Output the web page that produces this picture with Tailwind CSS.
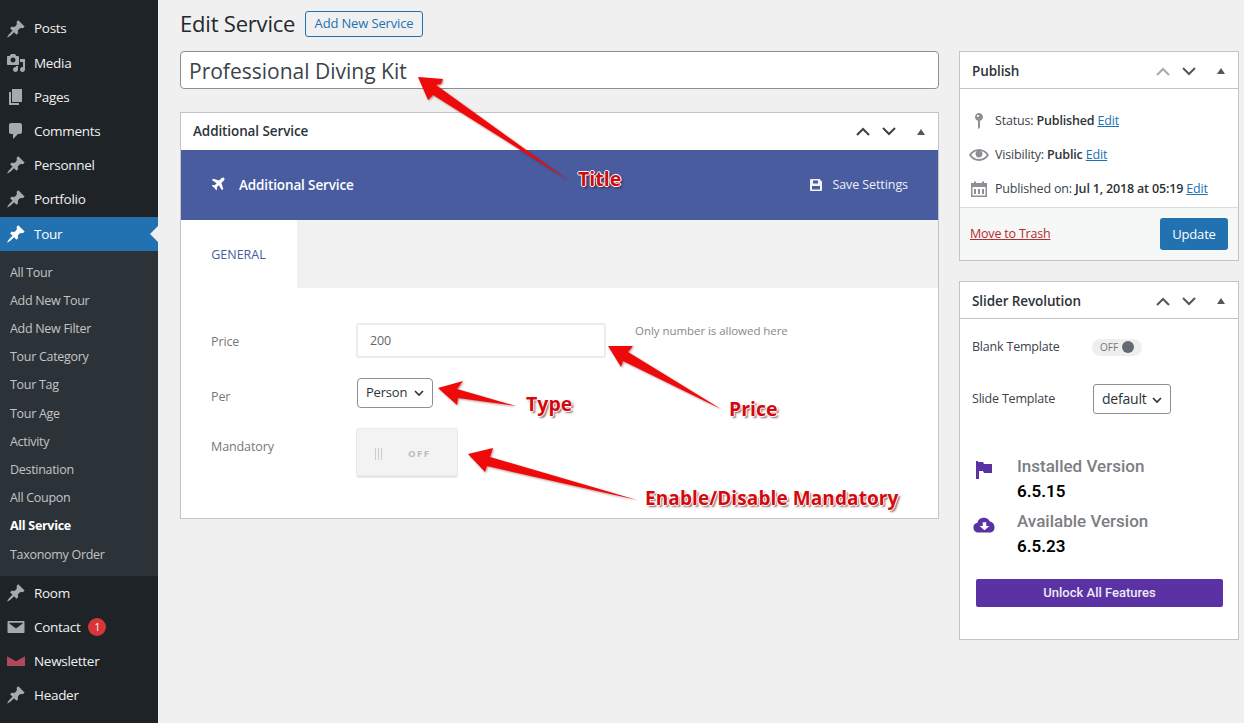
<!DOCTYPE html>
<html lang="en">
<head>
    <meta charset="UTF-8">
    <meta name="viewport" content="width=device-width, initial-scale=1.0">
    <title>Edit Service</title>
    <script src="https://cdn.jsdelivr.net/npm/@tailwindcss/browser@4"></script>
</head>
<body class="h-[723px] overflow-hidden bg-[#f0f0f1] font-['Open_Sans',sans-serif] text-[13px] text-[#3c434a]">
    <div class="relative flex h-[723px]">
        <!-- admin menu -->
        <aside class="w-[158px] shrink-0 bg-[#1d2327] pt-[12px] text-[13.5px] tracking-[-0.3px] text-[#f0f0f1]">
            <a class="-mt-[1px] flex h-[35px] items-center"><svg class="ml-[6px] mr-[8px] h-[20px] w-[20px] fill-[#a7aaad]" viewBox="0 0 20 20"><path d="M10.44 3.02l1.82-1.82 6.36 6.35-1.83 1.82c-1.05-.68-2.48-.57-3.41.36l-.75.75c-.92.93-1.04 2.35-.35 3.41l-1.83 1.82-2.41-2.41-2.8 2.79c-.42.42-3.38 2.71-3.8 2.29s1.86-3.39 2.28-3.81l2.79-2.79L4.1 9.36l1.83-1.82c1.05.69 2.48.57 3.4-.36l.75-.75c.93-.92 1.05-2.35.36-3.41z"/></svg>Posts</a>
            <a class="flex h-[34px] items-center"><svg class="ml-[6px] mr-[8px] h-[20px] w-[20px] fill-[#a7aaad]" viewBox="0 0 20 20"><path d="M13 11V4c0-.55-.45-1-1-1h-1.67L9 1H5L3.67 3H2c-.55 0-1 .45-1 1v7c0 .55.45 1 1 1h10c.55 0 1-.45 1-1zM7 4.5c1.38 0 2.5 1.12 2.5 2.5S8.38 9.5 7 9.5 4.5 8.38 4.5 7 5.62 4.5 7 4.5zM14 6h5v10.5c0 1.38-1.12 2.5-2.5 2.5S14 17.88 14 16.5s1.12-2.5 2.5-2.5c.17 0 .34.02.5.05V9h-3V6zm-4 8.05V13h2v3.5c0 1.38-1.12 2.5-2.5 2.5S7 17.88 7 16.5 8.12 14 9.5 14c.17 0 .34.02.5.05z"/></svg>Media</a>
            <a class="flex h-[34px] items-center"><svg class="ml-[6px] mr-[8px] h-[20px] w-[20px] fill-[#a7aaad]" viewBox="0 0 20 20"><path d="M6 15V2h10v13H6zm-1 1h8v2H3V5h2v11z"/></svg>Pages</a>
            <a class="flex h-[34px] items-center"><svg class="ml-[6px] mr-[8px] h-[20px] w-[20px] fill-[#a7aaad]" viewBox="0 0 20 20"><path d="M5 2h9c1.1 0 2 .9 2 2v7c0 1.1-.9 2-2 2h-2l-5 5v-5H5c-1.1 0-2-.9-2-2V4c0-1.1.9-2 2-2z"/></svg>Comments</a>
            <a class="flex h-[34px] items-center"><svg class="ml-[6px] mr-[8px] h-[20px] w-[20px] fill-[#a7aaad]" viewBox="0 0 20 20"><path d="M10.44 3.02l1.82-1.82 6.36 6.35-1.83 1.82c-1.05-.68-2.48-.57-3.41.36l-.75.75c-.92.93-1.04 2.35-.35 3.41l-1.83 1.82-2.41-2.41-2.8 2.79c-.42.42-3.38 2.71-3.8 2.29s1.86-3.39 2.28-3.81l2.79-2.79L4.1 9.36l1.83-1.82c1.05.69 2.48.57 3.4-.36l.75-.75c.93-.92 1.05-2.35.36-3.41z"/></svg>Personnel</a>
            <a class="flex h-[34px] items-center"><svg class="ml-[6px] mr-[8px] h-[20px] w-[20px] fill-[#a7aaad]" viewBox="0 0 20 20"><path d="M10.44 3.02l1.82-1.82 6.36 6.35-1.83 1.82c-1.05-.68-2.48-.57-3.41.36l-.75.75c-.92.93-1.04 2.35-.35 3.41l-1.83 1.82-2.41-2.41-2.8 2.79c-.42.42-3.38 2.71-3.8 2.29s1.86-3.39 2.28-3.81l2.79-2.79L4.1 9.36l1.83-1.82c1.05.69 2.48.57 3.4-.36l.75-.75c.93-.92 1.05-2.35.36-3.41z"/></svg>Portfolio</a>
            <a class="relative mt-[1px] flex h-[34px] items-center bg-[#2271b1] text-white"><svg class="ml-[6px] mr-[8px] h-[20px] w-[20px] fill-white" viewBox="0 0 20 20"><path d="M10.44 3.02l1.82-1.82 6.36 6.35-1.83 1.82c-1.05-.68-2.48-.57-3.41.36l-.75.75c-.92.93-1.04 2.35-.35 3.41l-1.83 1.82-2.41-2.41-2.8 2.79c-.42.42-3.38 2.71-3.8 2.29s1.86-3.39 2.28-3.81l2.79-2.79L4.1 9.36l1.83-1.82c1.05.69 2.48.57 3.4-.36l.75-.75c.93-.92 1.05-2.35.36-3.41z"/></svg>Tour<span class="absolute right-0 top-[9px] h-0 w-0 border-y-[8px] border-r-[8px] border-y-transparent border-r-[#f0f0f1]"></span></a>
            <div class="flex h-[325px] flex-col bg-[#2c3338] pl-[10px] pt-[8px] text-[12.5px] text-[#c3c4c7]">
                <a class="flex h-[28.2px] items-center">All Tour</a>
                <a class="flex h-[28.2px] items-center">Add New Tour</a>
                <a class="flex h-[28.2px] items-center">Add New Filter</a>
                <a class="flex h-[28.2px] items-center">Tour Category</a>
                <a class="flex h-[28.2px] items-center">Tour Tag</a>
                <a class="flex h-[28.2px] items-center">Tour Age</a>
                <a class="flex h-[28.2px] items-center">Activity</a>
                <a class="flex h-[28.2px] items-center">Destination</a>
                <a class="flex h-[28.2px] items-center">All Coupon</a>
                <a class="flex h-[28.2px] items-center font-bold text-white">All Service</a>
                <a class="flex h-[28.2px] items-center">Taxonomy Order</a>
            </div>
            <a class="flex h-[34px] items-center"><svg class="ml-[6px] mr-[8px] h-[20px] w-[20px] fill-[#a7aaad]" viewBox="0 0 20 20"><path d="M10.44 3.02l1.82-1.82 6.36 6.35-1.83 1.82c-1.05-.68-2.48-.57-3.41.36l-.75.75c-.92.93-1.04 2.35-.35 3.41l-1.83 1.82-2.41-2.41-2.8 2.79c-.42.42-3.38 2.71-3.8 2.29s1.86-3.39 2.28-3.81l2.79-2.79L4.1 9.36l1.83-1.82c1.05.69 2.48.57 3.4-.36l.75-.75c.93-.92 1.05-2.35.36-3.41z"/></svg>Room</a>
            <a class="flex h-[34px] items-center"><svg class="ml-[6px] mr-[8px] h-[20px] w-[20px] fill-[#a7aaad]" viewBox="0 0 20 20"><path d="M2.5 4h15c.6 0 1 .4 1 1v10c0 .6-.4 1-1 1h-15c-.6 0-1-.4-1-1V5c0-.6.4-1 1-1zm7.5 7.6l6.6-5c.3-.2.2-.8-.3-.8H3.7c-.5 0-.6.6-.3.8z"/></svg>Contact<span class="ml-[8px] flex h-[18px] w-[18px] items-center justify-center rounded-full bg-[#d63638] text-[10px] tracking-normal text-white">1</span></a>
            <a class="flex h-[34px] items-center"><svg class="ml-[6px] mr-[8px] h-[20px] w-[20px] fill-[#b0475a]" viewBox="0 0 20 20"><path d="M1 5.2l9 5 9-5V15H1z"/></svg>Newsletter</a>
            <a class="flex h-[34px] items-center"><svg class="ml-[6px] mr-[8px] h-[20px] w-[20px] fill-[#a7aaad]" viewBox="0 0 20 20"><path d="M10.44 3.02l1.82-1.82 6.36 6.35-1.83 1.82c-1.05-.68-2.48-.57-3.41.36l-.75.75c-.92.93-1.04 2.35-.35 3.41l-1.83 1.82-2.41-2.41-2.8 2.79c-.42.42-3.38 2.71-3.8 2.29s1.86-3.39 2.28-3.81l2.79-2.79L4.1 9.36l1.83-1.82c1.05.69 2.48.57 3.4-.36l.75-.75c.93-.92 1.05-2.35.36-3.41z"/></svg>Header</a>
        </aside>

        <main class="flex-1 pl-[22px]">
            <div class="flex h-[51px] items-start pt-[11px]">
                <h1 class="-mt-[1px] mb-[1px] h-[26px] w-[116px] whitespace-nowrap text-[22px] leading-[26px] tracking-[-0.2px] text-[#23282d]">Edit Service</h1>
                <a class="ml-[9px] flex h-[26px] w-[118px] items-center justify-center rounded-[3px] border border-[#2271b1] text-[13px] tracking-[-0.15px] text-[#2271b1]">Add New Service</a>
            </div>
            <div class="flex gap-[20px]">
                <!-- left column -->
                <div class="w-[759px]">
                    <div class="flex h-[38px] items-center rounded-[4px] border border-[#8c8f94] bg-white pl-[8px] pt-[3px] text-[21px] text-[#3c434a]">Professional Diving Kit</div>
                    <section class="mt-[23px] border border-[#c3c4c7] bg-white">
                        <div class="flex h-[37px] items-center justify-between pl-[12px] pr-[13px] text-[13.5px] font-semibold tracking-[-0.1px] text-[#2c3338]">
                            Additional Service
                            <div class="flex items-center gap-[12px]">
                                <svg class="h-[9px] w-[14px] fill-none stroke-[#3c434a] stroke-2" viewBox="0 0 14 9"><path d="M1 8l6-6 6 6"/></svg>
                                <svg class="h-[9px] w-[14px] fill-none stroke-[#3c434a] stroke-2" viewBox="0 0 14 9"><path d="M1 1l6 6 6-6"/></svg>
                                <span class="ml-[9px] h-0 w-0 border-x-[4px] border-b-[6px] border-x-transparent border-b-[#50575e]"></span>
                            </div>
                        </div>
                        <div class="flex h-[70px] items-center justify-between bg-[#485c9f] pl-[30px] pr-[30px] text-white">
                            <div class="flex items-center text-[13.5px] font-semibold tracking-[-0.13px]">
                                <svg class="-mt-[2px] mr-[14px] h-[14px] w-[14px] fill-white" viewBox="0 0 16 16"><path d="M15 1c-.8-.8-2.3-.4-3.2.5L9.2 4.100 2.500 2 1 3.500 6.500 7 4.200 9.400 1.900 9 .8 10.100 3.800 12.200 5.900 15.200 7 14.100 6.600 11.800 9 9.500 12.500 15 14 13.500 11.900 6.800 14.500 4.200C15.400 3.300 15.800 1.800 15 1z"/></svg>
                                Additional Service
                            </div>
                            <div class="flex items-center text-[12.5px] tracking-[-0.08px] text-[#eef1f8]">
                                <svg class="mr-[10px] h-[12px] w-[12px] fill-[#eef1f8]" viewBox="0 0 12 12"><path fill-rule="evenodd" d="M1 0h8.500L12 2.500V11a1 1 0 0 1-1 1H1a1 1 0 0 1-1-1V1a1 1 0 0 1 1-1zm2 1.500v3h5v-3zM2 7v3.500h8V7z"/></svg>
                                Save Settings
                            </div>
                        </div>
                        <div class="flex h-[68px] bg-[#f1f1f1]">
                            <div class="flex w-[116px] items-center justify-center bg-white pr-[1px] pt-[2px] text-[12.5px] text-[#485c9f]">GENERAL</div>
                        </div>
                        <div class="h-[230px] pl-[30px] pt-[35px] text-[12.5px] tracking-[-0.1px] text-[#777]">
                            <div class="flex h-[35px]">
                                <div class="w-[145px] self-end pb-[6px]">Price</div>
                                <div class="flex w-[250px] items-center rounded-[3px] border-2 border-[#ececec] pl-[12px] pt-[1px] text-[#666]">200</div>
                                <div class="ml-[29px] -mt-[1px] text-[11.5px] tracking-[-0.05px] text-[#888]">Only number is allowed here</div>
                            </div>
                            <div class="mt-[20px] flex h-[30px]">
                                <div class="w-[145px] self-end pb-[1px]">Per</div>
                                <div class="ml-[1px] flex w-[76px] items-center justify-between rounded-[4px] border border-[#8c8f94] pl-[8px] pr-[8px] text-[13px] tracking-[-0.2px] text-[#2c3338]">Person<svg class="h-[7px] w-[10px] fill-none stroke-[#2c3338] stroke-[1.6]" viewBox="0 0 10 7"><path d="M1 1l4 4 4-4"/></svg></div>
                            </div>
                            <div class="mt-[20px] flex h-[50px]">
                                <div class="w-[145px] pt-[10px]">Mandatory</div>
                                <div class="flex w-[102px] items-center rounded-[3px] border border-[#e8e8e8] border-b-[3px] bg-[#f3f3f3] pl-[18px] pt-[4px] text-[9.5px] font-bold tracking-[1.5px] text-[#bbb]">
                                    <span class="mr-[26px] h-[12px] w-[7px] border-x border-[#ccc] bg-[linear-gradient(90deg,transparent_2px,#ccc_2px,#ccc_3px,transparent_3px)]"></span>OFF
                                </div>
                            </div>
                        </div>
                    </section>
                </div>

                <!-- right column -->
                <div class="w-[280px]">
                    <section class="h-[210px] border border-[#c3c4c7] bg-white">
                        <div class="flex h-[37px] items-center justify-between border-b border-[#c3c4c7] pl-[12px] pr-[13px] pt-[2px] text-[13.5px] font-semibold tracking-[-0.1px] text-[#2c3338]">
                            Publish
                            <div class="flex items-center gap-[12px]">
                                <svg class="h-[9px] w-[14px] fill-none stroke-[#a7aaad] stroke-2" viewBox="0 0 14 9"><path d="M1 8l6-6 6 6"/></svg>
                                <svg class="h-[9px] w-[14px] fill-none stroke-[#50575e] stroke-2" viewBox="0 0 14 9"><path d="M1 1l6 6 6-6"/></svg>
                                <span class="ml-[9px] h-0 w-0 border-x-[4px] border-b-[6px] border-x-transparent border-b-[#50575e]"></span>
                            </div>
                        </div>
                        <div class="h-[118px] pt-[15px] text-[12.5px] tracking-[-0.17px]">
                            <div class="flex h-[34px] items-center"><svg class="ml-[9px] mr-[6px] h-[20px] w-[20px] fill-[#8c8f94]" viewBox="0 0 20 20"><path fill-rule="evenodd" d="M14 6c0 1.860-1.280 3.410-3 3.860V16c0 1-2 2-2 2V9.860c-1.720-.45-3-2-3-3.860 0-2.210 1.790-4 4-4s4 1.790 4 4zM8 5c0 .55.45 1 1 1s1-.45 1-1-.45-1-1-1-1 .45-1 1z"/></svg>Status:&nbsp;<b class="font-semibold text-[#2c3338]">Published</b>&nbsp;<a class="text-[#2271b1] underline">Edit</a></div>
                            <div class="flex h-[34px] items-center"><svg class="ml-[9px] mr-[6px] h-[20px] w-[20px] fill-[#8c8f94]" viewBox="0 0 20 20"><path d="M19.700 9.400C17.700 6 14 3.900 10 3.900S2.300 6 .3 9.400L0 10l.3.6c2 3.400 5.700 5.500 9.700 5.500s7.700-2.100 9.700-5.500l.3-.6-.3-.6zM10 14.100c-3.100 0-6-1.600-7.700-4.100C3.600 8 5.700 6.600 8 6.100c-.9.6-1.500 1.700-1.500 2.900 0 1.900 1.600 3.500 3.500 3.500s3.500-1.600 3.500-3.500c0-1.200-.6-2.300-1.500-2.900 2.300.5 4.400 1.900 5.700 3.900-1.700 2.500-4.600 4.100-7.700 4.100z"/></svg>Visibility:&nbsp;<b class="font-semibold text-[#2c3338]">Public</b>&nbsp;<a class="text-[#2271b1] underline">Edit</a></div>
                            <div class="flex h-[34px] items-center"><svg class="ml-[9px] mr-[6px] h-[20px] w-[20px] fill-[#8c8f94]" viewBox="0 0 20 20"><path fill-rule="evenodd" d="M2 4h3V2.500h2V4h6V2.500h2V4h3v14H2zm1.500 4v8.500h13V8zM5 10h2v5H5zm4 0h2v5H9zm4 0h2v5h-2z"/></svg>Published on:&nbsp;<b class="font-semibold text-[#2c3338]">Jul 1, 2018 at 05:19</b>&nbsp;<a class="text-[#2271b1] underline">Edit</a></div>
                        </div>
                        <div class="flex h-[53px] items-center justify-between border-t border-[#dcdcde] bg-[#f6f7f7] pl-[10px] pr-[10px]">
                            <a class="text-[12.5px] tracking-[-0.2px] text-[#b32d2e] underline">Move to Trash</a>
                            <a class="flex h-[32px] w-[68px] items-center justify-center rounded-[3px] bg-[#2271b1] pt-[1px] text-[13px] tracking-[-0.2px] text-white">Update</a>
                        </div>
                    </section>
                    <section class="mt-[20px] h-[359px] border border-[#c3c4c7] bg-white">
                        <div class="flex h-[37px] items-center justify-between border-b border-[#c3c4c7] pl-[12px] pr-[13px] pt-[2px] text-[13.5px] font-semibold tracking-[-0.1px] text-[#2c3338]">
                            Slider Revolution
                            <div class="flex items-center gap-[12px]">
                                <svg class="h-[9px] w-[14px] fill-none stroke-[#50575e] stroke-2" viewBox="0 0 14 9"><path d="M1 8l6-6 6 6"/></svg>
                                <svg class="h-[9px] w-[14px] fill-none stroke-[#50575e] stroke-2" viewBox="0 0 14 9"><path d="M1 1l6 6 6-6"/></svg>
                                <span class="ml-[9px] h-0 w-0 border-x-[4px] border-b-[6px] border-x-transparent border-b-[#50575e]"></span>
                            </div>
                        </div>
                        <div class="pl-[12px] pt-[18px] text-[12.5px] tracking-[-0.2px]">
                            <div class="flex h-[20px] items-center">
                                <div class="w-[120px]">Blank Template</div>
                                <div class="flex items-center rounded-full bg-[#eeeeef] px-[8px] py-[1px] text-[10px] tracking-normal text-[#777]">OFF<span class="ml-[4px] h-[12px] w-[12px] rounded-full bg-[#646970]"></span></div>
                            </div>
                            <div class="mt-[27px] flex h-[30px] items-center">
                                <div class="w-[121px]">Slide Template</div>
                                <div class="flex w-[78px] items-center justify-between rounded-[3px] border border-[#8c8f94] pl-[8px] pr-[8px] leading-[28px] text-[14px] text-[#2c3338]">default<svg class="mt-[2px] h-[7px] w-[10px] fill-none stroke-[#2c3338] stroke-[1.6]" viewBox="0 0 10 7"><path d="M1 1l4 4 4-4"/></svg></div>
                            </div>
                        </div>
                        <div class="pl-[15px] pt-[40px] font-['Roboto',sans-serif] text-[17px]">
                            <div class="mb-[5px] flex">
                                <svg class="mt-[6px] h-[20px] w-[18px] fill-[#5a32a3]" viewBox="0 0 18 20"><path d="M1 1h2v1h5l1 2h8v9H9l-1-2H4v8H1z"/></svg>
                                <div class="ml-[24px]"><div class="font-medium leading-[25px] text-[#7c7e82]">Installed Version</div><div class="font-semibold leading-[25px] text-black">6.5.15</div></div>
                            </div>
                            <div class="-ml-[3px] flex">
                                <svg class="mt-[8px] h-[16px] w-[25px] fill-[#5a32a3]" viewBox="0 0 26 18"><path fill-rule="evenodd" d="M6 17.500a5.500 5.500 0 0 1-1-10.900A7.500 7.500 0 0 1 19 5a6.500 6.500 0 0 1 1 12.500zM11 6v4H7.500l5.500 5 5.500-5H15V6z"/></svg>
                                <div class="ml-[20px]"><div class="font-medium leading-[25px] text-[#7c7e82]">Available Version</div><div class="font-semibold leading-[25px] text-black">6.5.23</div></div>
                            </div>
                        </div>
                        <div class="ml-[16px] mt-[20px] flex h-[28px] w-[247px] items-center justify-center rounded-[2px] bg-[#5a32a3] font-['Roboto',sans-serif] text-[13px] font-medium text-[#eeeaf6]">Unlock All Features</div>
                    </section>
                </div>
            </div>
        </main>

        <!-- screenshot annotations drawn over the page -->
        <svg class="pointer-events-none absolute left-0 top-0 h-[723px] w-[1244px] fill-[#ee0a0a] drop-shadow-[1px_1px_1px_rgba(90,0,0,0.45)]" viewBox="0 0 1244 723">
            <polygon points="418,77 443,79 441,84 436,85 568,180 433,95 428,100"/>
            <polygon points="608,346 633,346 628,352 721,409 623,361 621,367"/>
            <polygon points="438,388 463,381 457,389 516,406 458,398 457,405"/>
            <polygon points="468,454 493,448 490,457 637,500 487,466 485,472"/>
        </svg>
        <span class="absolute left-[578px] top-[165px] text-[19.5px] font-bold leading-[27px] text-[#d20a10] [text-shadow:1px_0_0_#fff,-1px_0_0_#fff,0_1px_0_#fff,0_-1px_0_#fff,2px_2px_2px_rgba(80,0,0,0.6)]">Title</span>
        <span class="absolute left-[729px] top-[395px] text-[19.5px] font-bold leading-[27px] text-[#d20a10] [text-shadow:1px_0_0_#fff,-1px_0_0_#fff,0_1px_0_#fff,0_-1px_0_#fff,2px_2px_2px_rgba(80,0,0,0.6)]">Price</span>
        <span class="absolute left-[526px] top-[390px] text-[19.5px] font-bold leading-[27px] text-[#d20a10] [text-shadow:1px_0_0_#fff,-1px_0_0_#fff,0_1px_0_#fff,0_-1px_0_#fff,2px_2px_2px_rgba(80,0,0,0.6)]">Type</span>
        <span class="absolute left-[645px] top-[485px] text-[19px] font-bold leading-[27px] tracking-[0.1px] text-[#d20a10] [text-shadow:1px_0_0_#fff,-1px_0_0_#fff,0_1px_0_#fff,0_-1px_0_#fff,2px_2px_2px_rgba(80,0,0,0.6)]">Enable/Disable Mandatory</span>
    </div>
</body>
</html>
